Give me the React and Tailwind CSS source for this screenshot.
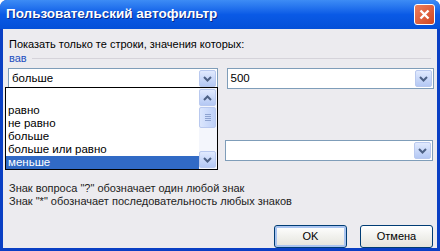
import React from "react";

const font = { fontFamily: '"Liberation Sans", Arial, sans-serif' };

const ArrowBtn = ({ up = false }) => (
  <div className="w-[17px] h-[17px] rounded-[2px] border border-[#b9c9ef] bg-gradient-to-b from-[#e1eafe] to-[#b4c8f4] flex items-center justify-center">
    <svg width="9" height="6" viewBox="0 0 9 6">
      <path
        d={up ? "M1 5 L4.5 1.5 L8 5" : "M1 1 L4.5 4.5 L8 1"}
        fill="none"
        stroke="#4d6185"
        strokeWidth="2"
      />
    </svg>
  </div>
);

const Combo = ({ value, width }) => (
  <div
    className={`${width} h-[21px] bg-white border border-[#7f9db9] flex items-center pl-[3px] pr-[1px]`}
  >
    <span className="flex-1 text-[11.5px] text-black leading-none">{value}</span>
    <ArrowBtn />
  </div>
);

export default function App() {
  const items = ["", "равно", "не равно", "больше", "больше или равно", "меньше"];

  return (
    <div className="w-[440px] h-[251px] bg-[#0a3fc4] rounded-t-[7px] flex flex-col overflow-hidden" style={font}>
      {/* заголовок */}
      <div className="h-[29px] shrink-0 bg-gradient-to-b from-[#3d8cf5] via-[#0a5ae6] to-[#0450d8] flex items-center justify-between pl-[6px] pr-[5px]">
        <span className="text-white font-bold text-[13.5px] [text-shadow:1px_1px_0_#0a2a8a]">
          Пользовательский автофильтр
        </span>
        <div className="w-[21px] h-[21px] rounded-[3px] border border-white bg-gradient-to-br from-[#ee7e5c] to-[#cf4520] flex items-center justify-center">
          <svg width="11" height="11" viewBox="0 0 11 11">
            <path d="M1.5 1.5 L9.5 9.5 M9.5 1.5 L1.5 9.5" stroke="white" strokeWidth="2.4" />
          </svg>
        </div>
      </div>

      {/* тело */}
      <div className="flex-1 mx-[3px] mb-[3px] bg-[#ecebef] relative text-[11px] text-black px-[3px]">
        <div className="pt-[8px] pl-[3px] leading-[14px]">
          Показать только те строки, значения которых:
        </div>
        <div className="flex items-center pl-[3px] mt-[1px] leading-[13px]">
          <span className="text-[#1d4fc0]">вав</span>
          <div className="flex-1 h-px bg-[#d5d3da] ml-[5px] mr-[3px]" />
        </div>

        <div className="flex gap-[9px] mt-[3px] pl-[2px]">
          <Combo value="больше" width="w-[210px]" />
          <Combo value="500" width="w-[208px]" />
        </div>

        <div className="flex justify-end mt-[51px] pr-[1px]">
          <Combo value="" width="w-[208px]" />
        </div>

        <div className="mt-[21px] pl-[3px] leading-[13px] text-[#222]">
          Знак вопроса "?" обозначает один любой знак
        </div>
        <div className="pl-[3px] leading-[13px] text-[#222]">
          Знак "*" обозначает последовательность любых знаков
        </div>

        <div className="flex justify-end gap-[13px] mt-[17px] pr-[1px]">
          <button className="w-[73px] h-[23px] rounded-[3px] border border-[#003c74] bg-gradient-to-b from-white to-[#e3e3db] shadow-[inset_0_0_0_2px_#a9c4f0] text-[11px] text-black">
            OK
          </button>
          <button className="w-[73px] h-[23px] rounded-[3px] border border-[#003c74] bg-gradient-to-b from-white to-[#e3e3db] text-[11px] text-black">
            Отмена
          </button>
        </div>

        {/* раскрытый список */}
        <div className="absolute left-[2px] top-[58px] w-[213px] h-[83px] bg-white border border-black flex text-[11.5px]">
          <div className="flex-1 flex flex-col pt-[2px]">
            {items.map((t, i) => (
              <div
                key={i}
                className={`h-[13.5px] leading-[13px] pl-[2px] ${
                  i === items.length - 1 ? "bg-[#316ac5] text-white" : "text-black"
                } ${i === 0 ? "h-[16px]" : ""}`}
              >
                {t}
              </div>
            ))}
          </div>
          <div className="w-[18px] flex flex-col justify-between bg-[#f4f6fc] py-[1px] pr-[1px]">
            <ArrowBtn up />
            <div className="flex-1 flex flex-col pt-[1px]">
              <div className="w-[17px] h-[21px] rounded-[2px] border border-[#b9c9ef] bg-gradient-to-r from-[#dbe6fd] to-[#bed0f8] flex flex-col items-center justify-center gap-[1px]">
                <div className="w-[6px] h-px bg-[#8ea3d0]" />
                <div className="w-[6px] h-px bg-[#8ea3d0]" />
                <div className="w-[6px] h-px bg-[#8ea3d0]" />
                <div className="w-[6px] h-px bg-[#8ea3d0]" />
              </div>
            </div>
            <ArrowBtn />
          </div>
        </div>
      </div>
    </div>
  );
}
